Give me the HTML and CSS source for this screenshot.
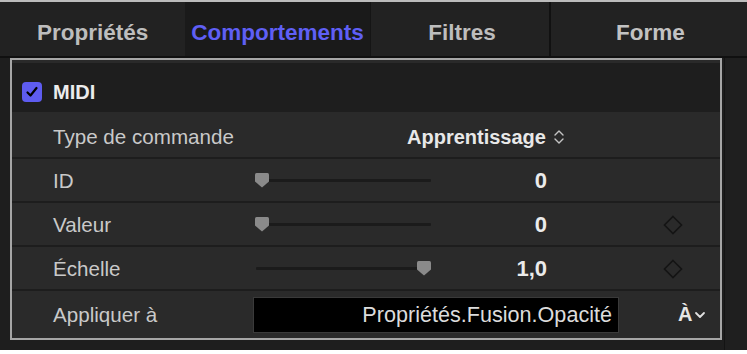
FILE: index.html
```html
<!DOCTYPE html>
<html lang="fr">
<head>
<meta charset="utf-8">
<title>Comportements MIDI</title>
<link rel="stylesheet" href="styles.css">
</head>
<body>
<div class="panel">
  <div class="tabs">
    <div class="tab">Propriétés</div>
    <div class="tab active">Comportements</div>
    <div class="tab">Filtres</div>
    <div class="tab light">Forme</div>
  </div>
  <div class="content">
    <div class="frame">
      <div class="header">
        <span class="check"><svg width="14" height="14" viewBox="0 0 14 14"><path d="M2.5 7.5 L5.5 10.5 L11.5 3" fill="none" stroke="#000" stroke-width="2.2" stroke-linecap="round" stroke-linejoin="round"/></svg></span>
        <span class="title">MIDI</span>
      </div>
      <div class="row first">
        <span class="label">Type de commande</span>
        <span class="popup">Apprentissage
          <svg class="updown" width="12" height="18" viewBox="0 0 12 18"><path d="M2 7 L6 3 L10 7 M2 11 L6 15 L10 11" fill="none" stroke="#c4c4c4" stroke-width="1.4" stroke-linecap="round" stroke-linejoin="round"/></svg>
        </span>
      </div>
      <div class="row">
        <span class="label">ID</span>
        <span class="slider"><span class="track"></span><svg class="thumb" width="16" height="16" viewBox="0 0 16 16"><path d="M2.5 1 H13.5 Q15 1 15 2.5 V9.5 L8 15.5 L1 9.5 V2.5 Q1 1 2.5 1 Z" fill="#8a8a8a"/></svg></span>
        <span class="value">0</span>
        <span class="key"></span>
      </div>
      <div class="row">
        <span class="label">Valeur</span>
        <span class="slider"><span class="track"></span><svg class="thumb" width="16" height="16" viewBox="0 0 16 16"><path d="M2.5 1 H13.5 Q15 1 15 2.5 V9.5 L8 15.5 L1 9.5 V2.5 Q1 1 2.5 1 Z" fill="#8a8a8a"/></svg></span>
        <span class="value">0</span>
        <span class="key"><svg width="20" height="20" viewBox="0 0 20 20"><path d="M10 1.5 L18.5 10 L10 18.5 L1.5 10 Z" fill="none" stroke="#141414" stroke-width="1.6"/></svg></span>
      </div>
      <div class="row">
        <span class="label">Échelle</span>
        <span class="slider end"><span class="track"></span><svg class="thumb" width="16" height="16" viewBox="0 0 16 16"><path d="M2.5 1 H13.5 Q15 1 15 2.5 V9.5 L8 15.5 L1 9.5 V2.5 Q1 1 2.5 1 Z" fill="#8a8a8a"/></svg></span>
        <span class="value">1,0</span>
        <span class="key"><svg width="20" height="20" viewBox="0 0 20 20"><path d="M10 1.5 L18.5 10 L10 18.5 L1.5 10 Z" fill="none" stroke="#141414" stroke-width="1.6"/></svg></span>
      </div>
      <div class="row last">
        <span class="label">Appliquer à</span>
        <span class="field">Propriétés.Fusion.Opacité</span>
        <span class="target">À<svg width="12" height="10" viewBox="0 0 12 10"><path d="M2 3 L6 7 L10 3" fill="none" stroke="#e0e0e0" stroke-width="1.8" stroke-linecap="round" stroke-linejoin="round"/></svg></span>
      </div>
    </div>
    <div class="side"></div>
  </div>
</div>
</body>
</html>
```

FILE: styles.css
```css
* { box-sizing: border-box; }

html, body {
  margin: 0;
  padding: 0;
  background: #ffffff;
}

body {
  font-family: "Liberation Sans", Arial, sans-serif;
}

.panel {
  width: 747px;
  height: 350px;
  background: #1e1e1e;
  border-top: 2px solid #bcbcbc;
  display: flex;
  flex-direction: column;
}

.tabs {
  display: grid;
  grid-template-columns: 185px 185px 181px 196px;
  height: 56px;
  background: #222222;
  border-bottom: 2px solid #101010;
  flex: none;
}

.tab {
  display: flex;
  align-items: center;
  justify-content: center;
  font-size: 22.5px;
  font-weight: 700;
  color: #bdbdbd;
  padding-top: 7px;
}

.tab:nth-child(1) { justify-content: flex-start; padding-left: 37px; }
.tab.active { color: #5f5ff5; background: #1a1a1a; }
.tab:nth-child(3) { border-left: 1px solid #151515; border-right: 2px solid #111111; padding-left: 4px; }
.tab.light { color: #c2c2c2; padding-left: 3px; }

.content {
  flex: 1;
  display: flex;
  padding-left: 10px;
  padding-top: 0;
}

.frame {
  width: 712px;
  height: 282px;
  border: 2px solid #a6a6a6;
  background: #2a2a2a;
  display: flex;
  flex-direction: column;
}

.side {
  flex: 1;
  margin-left: 2px;
  border-left: 1px solid #141414;
  background: #1f1f1f;
}

.header {
  height: 52px;
  background: #1e1e1e;
  border-top: 3px solid #2a2a2a;
  display: flex;
  align-items: center;
  padding-left: 10px;
  padding-top: 9px;
  gap: 11px;
  flex: none;
}

.check {
  width: 20px;
  height: 20px;
  border-radius: 4px;
  background: #5e5cf0;
  display: flex;
  align-items: center;
  justify-content: center;
}

.title {
  font-size: 20px;
  font-weight: 700;
  color: #ececec;
}

.row {
  height: 44px;
  border-top: 2px solid #1d1d1d;
  display: grid;
  grid-template-columns: 200px 180px 114px 1fr;
  align-items: center;
  padding-left: 41px;
  padding-top: 1px;
  flex: none;
}

.row.first {
  height: 45px;
  border-top: none;
  border-top-right-radius: 6px;
  padding-top: 5px;
}

.row.last {
  height: 47px;
  padding-top: 2px;
}

.label {
  font-size: 20.6px;
  color: #c9c9c9;
}

.popup {
  grid-column: 2 / 5;
  padding-left: 154px;
  display: flex;
  align-items: center;
  gap: 7px;
  font-size: 20px;
  font-weight: 700;
  color: #e8e8e8;
}

.slider {
  position: relative;
  height: 18px;
  display: flex;
  align-items: center;
}

.track {
  display: block;
  margin-left: 4px;
  width: 174px;
  height: 3px;
  background: #1b1b1b;
  border-radius: 1px;
}

.slider .thumb {
  position: absolute;
  left: 1px;
  top: 0;
}

.slider.end .track { margin-left: 3px; width: 163px; }
.slider.end .thumb { left: 163px; }

.value {
  text-align: right;
  font-size: 22px;
  font-weight: 700;
  color: #ebebeb;
}

.key {
  padding-left: 116px;
  display: flex;
  align-items: center;
  height: 20px;
}

.field {
  grid-column: 2 / 4;
  width: 366px;
  height: 36px;
  background: #000000;
  border: 1px solid #3a3a3a;
  text-align: right;
  padding-right: 6px;
  font-size: 21.6px;
  line-height: 33px;
  color: #dcdcdc;
  white-space: nowrap;
  overflow: hidden;
}

.target {
  display: flex;
  align-items: center;
  gap: 2px;
  padding-left: 131px;
  font-size: 20px;
  font-weight: 700;
  color: #e6e6e6;
}
```
